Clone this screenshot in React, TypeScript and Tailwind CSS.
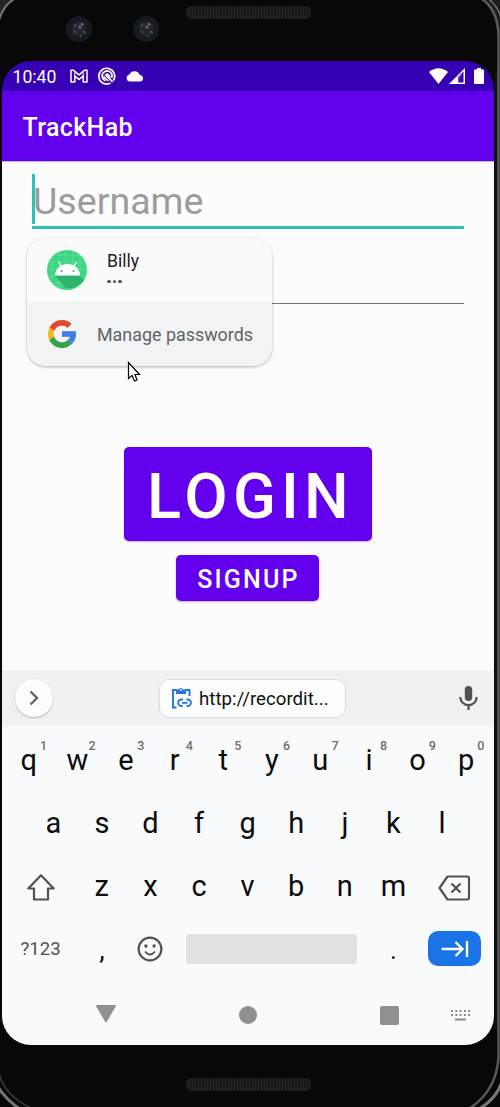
import React from "react";

const TOP_ROW = ["q", "w", "e", "r", "t", "y", "u", "i", "o", "p"];
const HOME_ROW = ["a", "s", "d", "f", "g", "h", "j", "k", "l"];
const BOTTOM_ROW = ["z", "x", "c", "v", "b", "n", "m"];

function Key({ label, hint }: { label: string; hint?: string }) {
  return (
    <div className="relative flex h-[63px] w-[48.6px] shrink-0 items-center justify-center pt-px pr-px text-[29px] leading-[34px] text-[#0c0c0d]">
      {label}
      {hint && (
        <span className="absolute top-[11px] left-[30.5px] w-4 text-center text-[12.5px] leading-[14px] font-medium text-[#6b6e72]">
          {hint}
        </span>
      )}
    </div>
  );
}

function PhoneBody() {
  return (
    <svg className="absolute inset-0" width="500" height="1107" viewBox="0 0 500 1107" fill="none">
      <path d="M0 0H15Q3 7 0 20Z" fill="#252525" />
      <path d="M14 -1Q3 6 -1 20" stroke="#767678" strokeWidth="2" />
      <path d="M482 0H500V40Q496 10 482 0Z" fill="#1d1d1e" />
      <path d="M482 -1Q498 10 498.5 36V1058Q496 1091 470 1108" stroke="#5a5a5c" strokeWidth="2.5" />
      <path d="M489 -1Q499 8 501 18" stroke="#747476" strokeWidth="1.5" />
      <path d="M-1 1073Q4 1095 31 1108" stroke="#3c3c3e" strokeWidth="1.5" />
      <path d="M-2 1087Q6 1100 20 1109" stroke="#777779" strokeWidth="3" />
      <path d="M502 1082Q496 1099 479 1109" stroke="#777779" strokeWidth="3" />
      <rect x="495" y="70" width="2" height="960" fill="#111214" />
    </svg>
  );
}

function CameraLens() {
  return (
    <svg width="26" height="26" viewBox="0 0 26 26">
      <circle cx="13" cy="13" r="13" fill="#171a1f" />
      <circle cx="13" cy="13" r="7.5" fill="#22262b" />
      <path d="M8 11l2-3M16 8l2 1M10 17l-2-2M17 16l2-1M14 20h2" stroke="#4a4f54" strokeWidth="1.5" />
      <circle cx="14" cy="11" r="2" fill="#55595e" />
      <circle cx="16" cy="8" r="0.8" fill="#9adfc0" />
      <circle cx="19" cy="17" r="0.8" fill="#547ba5" />
    </svg>
  );
}

function Speaker() {
  return (
    <div className="h-[13px] w-[125px] rounded-[5px] bg-[#191919] bg-[repeating-linear-gradient(90deg,#252525_0_1px,#191919_1px_3px)]" />
  );
}

function StatusBar() {
  return (
    <div className="flex h-[30px] items-center bg-[#3700b3] pl-[10.5px] text-white">
      <span className="w-[57px] pt-px text-[17.6px] leading-5">10:40</span>
      <svg width="18" height="14" viewBox="0 0 18 14" fill="none" stroke="white" strokeWidth="1.5">
        <path d="M1 1.2h2.300l5.700 4.600 5.700-4.600H17v11.800h-3.800V7L9 10.400 4.800 7v6H1z" strokeLinejoin="round" />
        <path d="M4.8 3.3V7M13.200 3.3V7" strokeWidth="1" />
      </svg>
      <svg className="ml-[10px]" width="18" height="18" viewBox="0 0 18 18" fill="none" stroke="white">
        <path d="M15.400 13.500A7.900 7.900 0 1 0 12.6 16.100" strokeWidth="1.700" />
        <path d="M7.500 13.700A5 5 0 1 1 13.700 10.800" strokeWidth="1.700" />
        <path d="M7.500 7.300A3 3 0 0 1 12 9.500L12 11.500z" fill="white" strokeWidth="1" />
        <path d="M7 7.5l7.700 7.300M5.300 9.300l5 4.700" strokeWidth="1.700" />
      </svg>
      <svg className="ml-[10px]" width="18" height="11" viewBox="0 0 18 11" fill="white">
        <path d="M4 10.500a3.600 3.600 0 0 1-.5-7.1A5.6 5.600 0 0 1 13.800 4 3.300 3.300 0 0 1 14.500 10.500z" />
      </svg>
      <svg className="ml-auto" width="19" height="16" viewBox="0 0 19 16" fill="white">
        <path d="M0 4Q9.5-3.500 19 4L9.500 16z" />
      </svg>
      <svg className="ml-px" width="16" height="16" viewBox="0 0 16 16">
        <path d="M0 16L16 0v16z" fill="white" />
        <path d="M9 9L14.500 3.500v11H9z" fill="#3700b3" />
        <path d="M9 9l3.500-3.500v2.500L10.500 10v4.500H9z" fill="white" fillOpacity="0.25" />
      </svg>
      <svg className="mr-2.5 ml-[9px]" width="10" height="16" viewBox="0 0 10 16" fill="white">
        <path d="M1 1.600h2V0h4v1.600h2a1 1 0 0 1 1 1V15a1 1 0 0 1-1 1H1a1 1 0 0 1-1-1V2.600a1 1 0 0 1 1-1z" />
      </svg>
    </div>
  );
}

function AndroidAvatar() {
  return (
    <svg width="40" height="40" viewBox="0 0 40 40" fill="none">
      <defs>
        <clipPath id="avatar">
          <circle cx="20" cy="20" r="20" />
        </clipPath>
      </defs>
      <g clipPath="url(#avatar)">
        <rect width="40" height="40" fill="#3bd680" />
        <path d="M5 0v40M12 0v40M19 0v40M26 0v40M33 0v40M0 5h40M0 12h40M0 19h40M0 26h40M0 33h40" stroke="#7be5aa" strokeWidth="0.5" />
        <path d="M7.500 25.500L19 38L26 38L37 31L33 25.500z" fill="#2fb26d" />
        <path d="M8 25.500C8.500 18 14 14 20.500 14S32.500 18 33 25.500z" fill="white" />
        <path d="M14 16l-2.300-4M27 16l2.300-4" stroke="white" strokeWidth="1.300" />
        <circle cx="14.500" cy="21" r="1.100" fill="#3bbd78" />
        <circle cx="26.500" cy="21" r="1.100" fill="#3bbd78" />
      </g>
    </svg>
  );
}

function GoogleLogo() {
  return (
    <svg width="28" height="28" viewBox="4 4 40 40">
      <path fill="#f3b71b" d="M43.611 20.083H42V20H24v8h11.303c-1.649 4.657-6.080 8-11.303 8-6.627 0-12-5.373-12-12s5.373-12 12-12c3.059 0 5.842 1.154 7.961 3.039l5.657-5.657C34.046 6.053 29.268 4 24 4 12.955 4 4 12.955 4 24s8.955 20 20 20 20-8.955 20-20c0-1.341-.138-2.650-.389-3.917z" />
      <path fill="#df4936" d="M6.306 14.691l6.571 4.819C14.655 15.108 18.961 12 24 12c3.059 0 5.842 1.154 7.961 3.039l5.657-5.657C34.046 6.053 29.268 4 24 4 16.318 4 9.656 8.337 6.306 14.691z" />
      <path fill="#2fa34e" d="M24 44c5.166 0 9.860-1.977 13.409-5.192l-6.190-5.238C29.211 35.091 26.715 36 24 36c-5.202 0-9.619-3.317-11.283-7.946l-6.522 5.025C9.505 39.556 16.227 44 24 44z" />
      <path fill="#3f7fe8" d="M43.611 20.083H42V20H24v8h11.303c-.792 2.237-2.231 4.166-4.087 5.571l6.193 5.237C36.971 39.205 44 34 44 24c0-1.341-.138-2.650-.389-3.917z" />
    </svg>
  );
}

function AutofillMenu() {
  return (
    <div className="absolute top-[77px] left-[25px] h-[128px] w-[245px] overflow-hidden rounded-[19px] bg-[#fbfbfb] shadow-[0_1px_3px_rgba(0,0,0,0.3)]">
      <div className="flex h-16 items-center pl-5">
        <AndroidAvatar />
        <div className="ml-5 flex flex-col text-[#1b1c1e]">
          <span className="text-[17.600px] leading-[22px]">Billy</span>
          <span className="flex h-[18px] items-center gap-[2px] pt-px">
            <i className="size-[3.500px] rounded-full bg-[#55585c]" />
            <i className="size-[3.500px] rounded-full bg-[#55585c]" />
            <i className="size-[3.500px] rounded-full bg-[#55585c]" />
          </span>
        </div>
      </div>
      <div className="flex h-16 items-center bg-[#f1f3f5] pl-[21px] text-[#606367]">
        <GoogleLogo />
        <span className="ml-[21px] pt-px whitespace-nowrap text-[17.900px] leading-6">Manage passwords</span>
      </div>
    </div>
  );
}

function LoginForm() {
  return (
    <main className="relative flex h-[509px] flex-col items-center bg-[#fcfcfc] shadow-[inset_0_1px_1px_rgba(55,0,179,0.3)]">
      <div className="mt-[13px] flex h-[55px] w-[432px] items-start border-b-[3px] border-[#2ac4b6]">
        <div className="h-[50px] w-[3px] bg-[#2ac4b6]" />
        <span className="-ml-[2px] pt-[3px] text-[37.600px] leading-[48px] text-[#9c9c9c]">Username</span>
      </div>
      <div className="h-[75px] w-[432px] border-b border-[#747474]" />
      <button className="mt-[143px] flex h-[94px] w-[248px] items-center justify-center rounded-[5px] bg-[#6200ee] pt-[5px] pl-[5px] text-[63px] leading-[74px] font-medium tracking-[5.200px] text-white shadow-[0_1px_2px_rgba(98,0,238,0.35)]">
        LOGIN
      </button>
      <button className="mt-3.5 mr-px flex h-[46px] w-[143px] items-center justify-center rounded-[5px] bg-[#6200ee] pt-[3px] pl-[2px] text-[25px] leading-7 font-medium tracking-[2.200px] text-white shadow-[0_1px_2px_rgba(98,0,238,0.35)]">
        SIGNUP
      </button>
      <AutofillMenu />
      <svg className="absolute top-[200px] left-[125px]" width="14" height="22" viewBox="0 0 14 22">
        <path d="M1.500 1.500V17.500L5 14.500L7.500 20L10 19L8 13.500H12.500z" fill="white" stroke="black" strokeWidth="1.200" />
      </svg>
    </main>
  );
}

function SuggestionBar() {
  return (
    <div className="flex h-14 items-center bg-[#eff1f3] pl-[13px]">
      <div className="flex size-[38px] items-center justify-center rounded-full bg-[#fdfdfd] shadow-[0_1px_2px_rgba(0,0,0,0.25)]">
        <svg width="10" height="16" viewBox="0 0 10 16" fill="none" stroke="#626468" strokeWidth="2.400">
          <path d="M1.500 1.500L8 8L1.500 14.500" />
        </svg>
      </div>
      <div className="ml-[106px] flex h-[39px] w-[187px] items-center rounded-[10px] border border-[#d8dadd] bg-[#fdfdfd] pl-[11px]">
        <svg className="-mt-px" width="22" height="22" viewBox="0 0 22 22" fill="none" stroke="#2375e3">
          <path d="M5.500 20.500H2V3H6M14 3h4.500v6" strokeWidth="1.900" />
          <path d="M5 2.500h2.700a2.500 2.500 0 0 1 4.600 0H15v4.500H5z" fill="#2375e3" stroke="none" />
          <circle cx="10" cy="3" r="0.900" fill="white" stroke="none" />
          <path d="M12 12.500h-1.500a3.300 3.300 0 0 0 0 6.600H12M15.500 12.500h1.200a3.300 3.300 0 0 1 0 6.600h-1.200M11 15.800h5.500" strokeWidth="1.800" />
        </svg>
        <span className="ml-[6px] whitespace-nowrap pt-[2px] text-[18.700px] leading-6 text-[#101112]">http://recordit...</span>
      </div>
      <svg className="mr-[16px] ml-auto" width="19" height="24" viewBox="0 0 19 24" fill="none">
        <rect x="5.800" y="0" width="7.400" height="15" rx="3.700" fill="#505256" />
        <path d="M1.300 11a8.200 8.200 0 0 0 16.400 0M9.500 19v5" stroke="#505256" strokeWidth="2.200" />
      </svg>
    </div>
  );
}

function Keyboard() {
  return (
    <div className="flex h-[319px] flex-col bg-[#f9fafc] pt-[2px]">
      <div className="flex pl-[3px]">
        {TOP_ROW.map((letter, i) => (
          <Key key={letter} label={letter} hint={String((i + 1) % 10)} />
        ))}
      </div>
      <div className="flex pl-[27.500px]">
        {HOME_ROW.map((letter) => (
          <Key key={letter} label={letter} />
        ))}
      </div>
      <div className="flex h-[63px] items-center">
        <div className="flex w-[76px] justify-center pt-[3px] pl-[2px]">
          <svg width="28" height="27" viewBox="0 0 28 27" fill="none" stroke="#505256" strokeWidth="2.200" strokeLinejoin="round">
            <path d="M14 1.300L1.300 14.500H7V25.500H21V14.500H26.700z" />
          </svg>
        </div>
        {BOTTOM_ROW.map((letter) => (
          <Key key={letter} label={letter} />
        ))}
        <svg className="mt-[4px] ml-[20px]" width="33" height="26" viewBox="0 0 33 26" fill="none" stroke="#505256" strokeWidth="2.200" strokeLinejoin="round">
          <path d="M9.500 1.500H29Q31 1.500 31 3.500V22.500Q31 24.500 29 24.500H9.500L1.500 13z" />
          <path d="M13.500 8.500l9 9M22.500 8.500l-9 9" />
        </svg>
      </div>
      <div className="flex h-[63px] items-center">
        <span className="w-[75px] pt-px pl-[18.500px] text-[18.600px] leading-6 text-[#505256]">?123</span>
        <span className="w-[50px] pt-[2px] text-center text-[28px] leading-8 text-[#151516]">,</span>
        <svg className="ml-[10px]" width="26" height="26" viewBox="0 0 26 26" fill="none" stroke="#505256" strokeWidth="2.200">
          <circle cx="13" cy="13" r="11.400" />
          <path d="M8 15.500Q13 21.500 18 15.500" strokeWidth="1.900" />
          <circle cx="8.900" cy="10" r="1.700" fill="#505256" stroke="none" />
          <circle cx="17.100" cy="10" r="1.700" fill="#505256" stroke="none" />
        </svg>
        <div className="ml-[23px] h-[30px] w-[171px] rounded-[3px] bg-[#e2e2e2]" />
        <span className="w-[73px] pt-[2px] text-center text-[26px] leading-8 text-[#151516]">.</span>
        <div className="-ml-[2px] flex h-[35px] w-[53px] items-center justify-center rounded-[10px] bg-[#1b73e8]">
          <svg width="28" height="18" viewBox="0 0 28 18" fill="none" stroke="white" strokeWidth="2.300">
            <path d="M0.500 9H21.500M14.500 2L21.500 9L14.500 16M26 1V17" />
          </svg>
        </div>
      </div>
      <div className="flex flex-1 items-start pt-[24px]">
        <svg className="ml-[93px]" width="22" height="20" viewBox="0 0 22 20" fill="#909090">
          <path d="M2 1H20Q21.500 1 20.700 2.500L12 17.500Q11 19 10 17.500L1.300 2.500Q.5 1 2 1z" />
        </svg>
        <div className="mt-[2px] ml-[122px] size-[18px] rounded-full bg-[#909090]" />
        <div className="mt-[2px] ml-[123px] size-[19px] rounded-[2px] bg-[#909090]" />
        <svg className="mt-[6px] ml-[52px]" width="20" height="11" viewBox="0 0 20 11" fill="none" stroke="#8b8b8d" strokeWidth="2">
          <path d="M0 1H20M0 5H20" strokeDasharray="2 2.300" />
          <path d="M4 9.500H15" />
        </svg>
      </div>
    </div>
  );
}

export default function App() {
  return (
    <div className="relative h-[1107px] w-[500px] overflow-hidden bg-[#080809] font-[Roboto,sans-serif]">
      <PhoneBody />
      <div className="relative flex h-[61px] items-start">
        <div className="flex w-[186px] gap-[41px] pt-4 pl-[66px]">
          <CameraLens />
          <CameraLens />
        </div>
        <div className="pt-1.5">
          <Speaker />
        </div>
      </div>
      <div className="relative ml-[2px] flex h-[984px] w-[492px] flex-col overflow-hidden rounded-[29px]">
        <StatusBar />
        <header className="flex h-[70px] items-center bg-[#6200ee] pt-[3px] pl-[20.500px] text-[25px] leading-8 font-medium tracking-[0.350px] text-white">
          TrackHab
        </header>
        <LoginForm />
        <SuggestionBar />
        <Keyboard />
      </div>
      <div className="relative flex justify-center pt-[33px] pr-[3px]">
        <Speaker />
      </div>
    </div>
  );
}
